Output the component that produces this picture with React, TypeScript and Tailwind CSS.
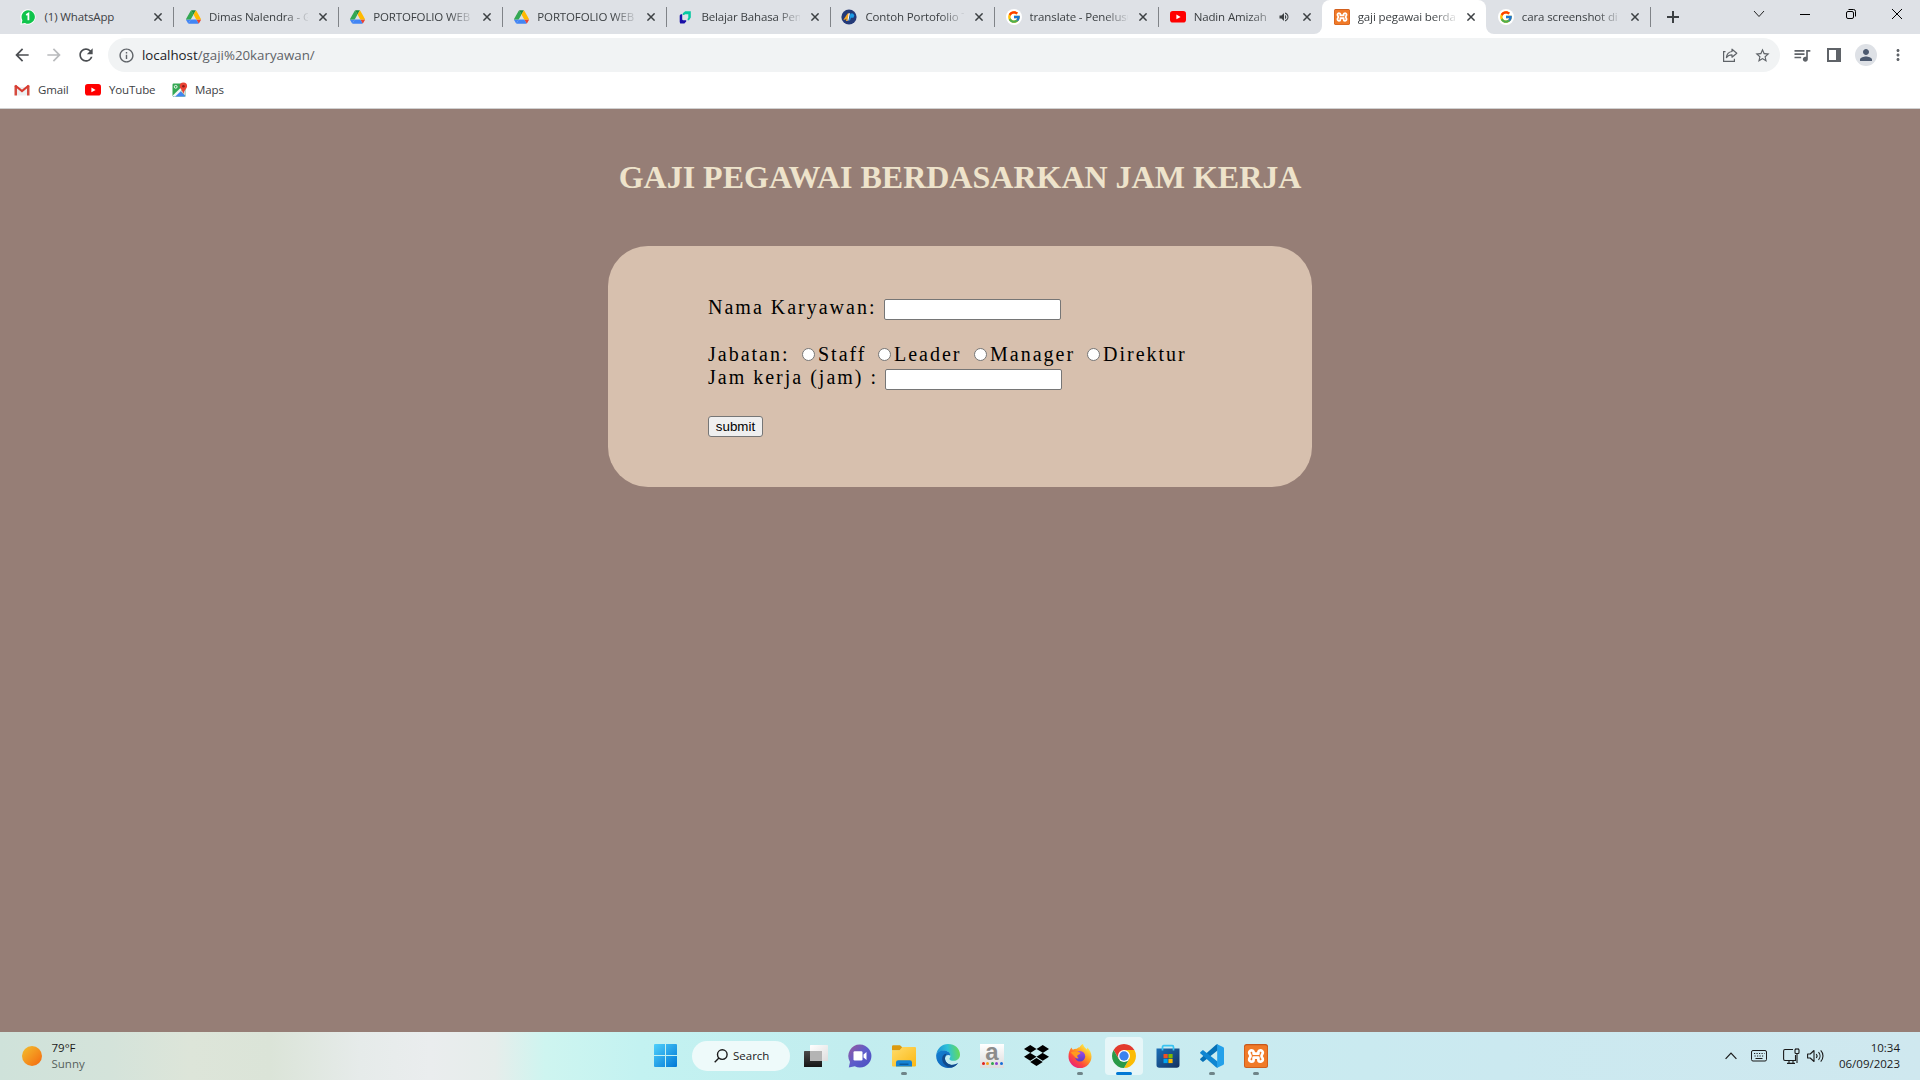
import React from "react";
import { FcGoogle } from "react-icons/fc";
import { FaDropbox } from "react-icons/fa";
import {
  MdArrowBack,
  MdArrowForward,
  MdRefresh,
  MdInfoOutline,
  MdStarBorder,
  MdQueueMusic,
  MdPerson,
  MdMoreVert,
  MdVolumeUp,
} from "react-icons/md";

function DriveIcon() {
  return (
    <svg viewBox="0 0 87.3 78" className="w-[15px] h-[14px]">
      <path d="m6.6 66.85 3.85 6.65c.8 1.4 1.95 2.5 3.3 3.3l13.75-23.8h-27.5c0 1.55.4 3.1 1.2 4.5z" fill="#4285f4" />
      <path d="m43.65 25-13.75-23.8c-1.35.8-2.5 1.900-3.300 3.300l-25.400 44a9.060 9.060 0 0 0 -1.200 4.500h27.500z" fill="#34a853" />
      <path d="m73.55 76.8c1.35-.8 2.5-1.9 3.3-3.3l1.6-2.75 7.65-13.25c.8-1.4 1.2-2.95 1.2-4.5h-27.5l5.85 11.5z" fill="#ea4335" />
      <path d="m43.65 25 13.75-23.8c-1.35-.8-2.9-1.2-4.5-1.2h-18.5c-1.6 0-3.15.45-4.5 1.2z" fill="#1f8f3e" />
      <path d="m59.8 53h-32.3l-13.75 23.8c1.35.8 2.9 1.2 4.5 1.2h50.8c1.6 0 3.15-.45 4.5-1.2z" fill="#4285f4" />
      <path d="m73.4 26.5-12.7-22c-.8-1.4-1.95-2.5-3.3-3.3l-13.75 23.8 16.15 28h27.45c0-1.55-.4-3.1-1.2-4.5z" fill="#ffba00" />
    </svg>
  );
}

function WhatsAppIcon() {
  return (
    <svg viewBox="0 0 16 16" className="w-4 h-4">
      <path d="M8 .2a7.7 7.7 0 1 1-3.300 14.700L.4 15.800l.9-4.200A7.700 7.700 0 0 1 8 .2z" fill="#fff" />
      <path d="M8 1.300a6.700 6.700 0 1 1-3 12.600L1.700 14.500l.7-3.200A6.700 6.700 0 0 1 8 1.300z" fill="#10c44c" />
      <path d="M6.200 6 8.400 4.600V11.200" fill="none" stroke="#fff" strokeWidth="1.800" />
    </svg>
  );
}

function YouTubeIcon() {
  return (
    <svg viewBox="0 0 16 12" className="w-4 h-3">
      <rect width="16" height="11.6" rx="2.8" fill="#f00" />
      <path d="M6.400 3.500v4.800l4.200-2.400z" fill="#fff" />
    </svg>
  );
}

function DicodingIcon() {
  return (
    <svg viewBox="0 0 16 16" className="w-4 h-4">
      <path d="M8.200 2.200h5.600v6.300l-1.800 2.800h-1.400V9.800l.7-.8V5.200H8L7.200 6H5.800V4.200z" fill="#07c9a2" />
      <path d="M3.800 5.200h1.400v5.300l.8.7h3.200v1.300l-1.800 1.900H3.200L2.700 13V6.500z" fill="#1a10a8" />
    </svg>
  );
}

function PortfolioIcon() {
  return (
    <svg viewBox="0 0 16 16" className="w-4 h-4">
      <circle cx="8" cy="8" r="7.600" fill="#243a78" />
      <path d="M2.400 10.800 6.600 4.600h1.600L6.400 12H4.900l.6-2.600-1.500 1.400z" fill="#f6a623" />
      <path d="M7.600 4.300h1.300L7.400 11.800H6.500z" fill="#fff" />
      <path d="M9.400 4.500h2.600l1.400 2-1 2.300H9.900L9 11.600H8z" fill="#1c9be6" />
    </svg>
  );
}

function GoogleIcon() {
  return (
    <div className="w-4 h-4 rounded-full bg-white flex items-center justify-center shrink-0">
      <FcGoogle size={14} />
    </div>
  );
}

function XamppIcon({ className }: { className: string }) {
  return (
    <svg viewBox="0 0 24 24" className={className}>
      <rect width="24" height="24" rx="2.500" fill="#c9581a" />
      <rect x=".8" y="1.200" width="22.400" height="22" rx="2" fill="#f07a28" />
      <path
        d="M9.600 9.700V8.200A1.900 1.900 0 0 0 7.700 6.300 2.300 2.300 0 0 0 5.200 8.600c0 1.700 1.300 1.900 1.300 3.400S5.200 13.700 5.200 15.400a2.300 2.300 0 0 0 2.500 2.300 1.900 1.900 0 0 0 1.900-1.900V13.700h4.800v2.100a1.900 1.900 0 0 0 1.900 1.900 2.300 2.300 0 0 0 2.500-2.300c0-1.700-1.300-1.900-1.300-3.400s1.300-1.700 1.300-3.400a2.300 2.300 0 0 0-2.500-2.300 1.900 1.900 0 0 0-1.900 1.900V9.700z"
        fill="none"
        stroke="#fff"
        strokeWidth="2.700"
        strokeLinejoin="round"
      />
    </svg>
  );
}

function CloseX() {
  return (
    <svg viewBox="0 0 8 8" className="w-2 h-2">
      <path d="M.4.4l7.200 7.200M7.600.4.4 7.600" stroke="#3c4043" strokeWidth="1.500" />
    </svg>
  );
}

type Tab = { title: string; icon: React.ReactNode; active?: boolean; audio?: boolean; sep?: boolean };

const tabs: Tab[] = [
  { title: "(1) WhatsApp", icon: <WhatsAppIcon />, sep: true },
  { title: "Dimas Nalendra - G", icon: <DriveIcon />, sep: true },
  { title: "PORTOFOLIO WEB", icon: <DriveIcon />, sep: true },
  { title: "PORTOFOLIO WEB", icon: <DriveIcon />, sep: true },
  { title: "Belajar Bahasa Pem", icon: <DicodingIcon />, sep: true },
  { title: "Contoh Portofolio T", icon: <PortfolioIcon />, sep: true },
  { title: "translate - Penelusu", icon: <GoogleIcon />, sep: true },
  { title: "Nadin Amizah", icon: <YouTubeIcon />, audio: true },
  { title: "gaji pegawai berda", icon: <XamppIcon className="w-4 h-4" />, active: true },
  { title: "cara screenshot di p", icon: <GoogleIcon />, sep: true },
];

function TabItem({ tab, first }: { tab: Tab; first: boolean }) {
  return (
    <div
      className={
        tab.active
          ? "relative w-[164.100px] h-[34px] shrink-0 flex items-center bg-white rounded-t-lg pb-px"
          : "relative w-[164.100px] h-[34px] shrink-0 flex items-center pb-px"
      }
    >
      <div
        className={
          first
            ? "ml-[10px] mr-[9px] w-4 h-4 flex items-center justify-center shrink-0"
            : "ml-[11.500px] mr-2 w-4 h-4 flex items-center justify-center shrink-0"
        }
      >
        {tab.icon}
      </div>
      <div
        className={
          tab.audio
            ? "w-[78px] shrink-0 whitespace-nowrap [mask-image:linear-gradient(to_right,black_70%,rgba(0,0,0,.3))]"
            : first
              ? "w-[98px] shrink-0 whitespace-nowrap"
              : "w-[98.500px] shrink-0 whitespace-nowrap [mask-image:linear-gradient(to_right,black_76%,rgba(0,0,0,.1))]"
        }
      >
        {tab.title}
      </div>
      {tab.audio && (
        <div className="w-[25px] shrink-0 flex items-center justify-center text-[#3c4043]">
          <MdVolumeUp size={12} />
        </div>
      )}
      <div className={tab.audio ? "ml-[6.500px] shrink-0" : "ml-[11px] shrink-0"}>
        <CloseX />
      </div>
      {tab.sep && <div className={first ? "ml-auto w-px h-5 bg-[#808388]" : "ml-auto -mr-px w-px h-5 bg-[#808388]"} />}
      {tab.active && (
        <>
          <div className="absolute bottom-0 -left-2 w-2 h-2 bg-white">
            <div className="w-2 h-2 bg-[#dee1e6] rounded-br-lg" />
          </div>
          <div className="absolute bottom-0 -right-2 w-2 h-2 bg-white">
            <div className="w-2 h-2 bg-[#dee1e6] rounded-bl-lg" />
          </div>
        </>
      )}
    </div>
  );
}

function WindowControls() {
  return (
    <div className="ml-auto flex h-7 items-center">
      <div className="w-[46px] flex justify-center">
        <svg viewBox="0 0 12 8" className="w-3 h-2">
          <path d="M1 1l5 5.500L11 1" fill="none" stroke="#222" />
        </svg>
      </div>
      <div className="w-[46px] flex justify-center">
        <div className="w-[10px] h-px bg-black mt-px" />
      </div>
      <div className="w-[46px] flex justify-center">
        <svg viewBox="0 0 12 12" className="w-3 h-3">
          <rect x="1.500" y="3.500" width="7" height="7" rx="1.500" fill="none" stroke="#000" />
          <path d="M3.500 1.500H8.500a2 2 0 0 1 2 2V8.500" fill="none" stroke="#000" />
        </svg>
      </div>
      <div className="w-[46px] flex justify-center">
        <svg viewBox="0 0 12 12" className="w-3 h-3">
          <path d="M1 1l10 10M11 1 1 11" stroke="#000" />
        </svg>
      </div>
    </div>
  );
}

function TabStrip() {
  return (
    <div className="h-[34px] bg-[#dee1e6] flex pl-[9.500px] text-[11.500px] tracking-[-0.130px] leading-[16px] text-[#3c4043]">
      {tabs.map((t, i) => (
        <TabItem key={i} tab={t} first={i === 0} />
      ))}
      <div className="ml-[16.500px] h-[34px] flex items-center">
        <svg viewBox="0 0 12 12" className="w-3 h-3">
          <path d="M6 0v12M0 6h12" stroke="#3c4043" strokeWidth="2" />
        </svg>
      </div>
      <WindowControls />
    </div>
  );
}

function Toolbar() {
  return (
    <div className="h-[42px] bg-white flex items-center text-[#5f6368]">
      <div className="w-8 ml-[6px] flex justify-center text-[#4b4e52]">
        <MdArrowBack size={20} />
      </div>
      <div className="w-8 flex justify-center text-[#b9bbbd]">
        <MdArrowForward size={20} />
      </div>
      <div className="w-8 flex justify-center text-[#4b4e52]">
        <MdRefresh size={20} />
      </div>
      <div className="ml-[6px] w-[1672px] h-[34px] rounded-full bg-[#f1f3f4] flex items-center">
        <MdInfoOutline size={17} className="ml-[9.500px]" />
        <div className="ml-[7.500px] text-[13.300px] leading-[18px] pb-px">
          <span className="text-[#202124]">localhost</span>/gaji%20karyawan/
        </div>
        <div className="ml-auto w-8 flex justify-center">
          <svg viewBox="0 0 16 16" className="w-4 h-4" fill="none" stroke="#5f6368" strokeWidth="1.200">
            <path d="M3.500 4.600H1.600v9.800h10.800v-2.600" />
            <path d="M10 2.200l4.800 4-4.800 4V7.900c-2.600 0-4.300.8-5.600 2.700.3-3.200 2-5.700 5.600-6.100z" strokeLinejoin="round" />
          </svg>
        </div>
        <div className="w-8 flex justify-center mr-[2px]">
          <MdStarBorder size={17} />
        </div>
      </div>
      <div className="w-8 ml-[6px] flex justify-center">
        <MdQueueMusic size={20} />
      </div>
      <div className="w-8 flex justify-center">
        <div className="w-[14px] h-[14px] border-2 border-r-[5px] border-[#5f6368]" />
      </div>
      <div className="w-8 flex justify-center">
        <div className="w-[22px] h-[22px] rounded-full bg-[#dee1e6] flex items-center justify-center text-[#4d5a70]">
          <MdPerson size={18} />
        </div>
      </div>
      <div className="w-8 flex justify-center">
        <MdMoreVert size={18} />
      </div>
    </div>
  );
}

function Bookmarks() {
  return (
    <div className="h-[33px] bg-white border-b border-[#d0d0d0] flex items-center text-[11.500px] tracking-[-0.120px] leading-[16px] text-[#3c4043] pb-[4px]">
      <svg viewBox="0 0 16 12" className="ml-[14px] w-4 h-3">
        <path d="M.5 1.500h2.500V11.500H.5zM13 1.500h2.500V11.500H13z" fill="#d54b3f" />
        <path d="M3 3h10v8.500H3z" fill="#eceff1" />
        <path d="M1.200 1.500 8 7l6.800-5.500" fill="none" stroke="#d93a2f" strokeWidth="2.200" />
      </svg>
      <div className="ml-2 w-[39px]">Gmail</div>
      <div className="ml-2 flex">
        <YouTubeIcon />
      </div>
      <div className="ml-2 w-[55px]">YouTube</div>
      <svg viewBox="0 0 16 16" className="ml-2 w-4 h-4">
        <rect x=".5" y="1.500" width="13" height="13" rx="1.200" fill="#34a853" />
        <path d="M1 14.500 7.500 8l6.300 6.500z" fill="#4285f4" />
        <path d="M.5 13.800 9.500 5l1.800 1.800L3 14.800z" fill="#f5f5f5" />
        <path d="M8.500 9l5 5V8z" fill="#d7dadd" />
        <path d="M11.400.6a3.700 3.700 0 0 1 3.700 3.700c0 2.500-2.600 3.200-3.500 7.200h-.4c-.9-4-3.500-4.700-3.500-7.200A3.700 3.700 0 0 1 11.400.6z" fill="#ea4335" />
        <circle cx="11.400" cy="4.200" r="1.300" fill="#8c1d18" />
        <circle cx="3.700" cy="4.800" r="1.400" fill="none" stroke="#fff" strokeWidth=".9" />
      </svg>
      <div className="ml-[7px]">Maps</div>
    </div>
  );
}

function Radio({ label, width }: { label: string; width: string }) {
  return (
    <label className={"flex items-center " + width}>
      <span className="w-[13px] h-[13px] rounded-full border border-[#767676] bg-white shrink-0" />
      <span className="ml-[3px]">{label}</span>
    </label>
  );
}

function Page() {
  return (
    <main className="flex-1 bg-[#967E76] flex flex-col items-center font-['Liberation_Serif',serif]">
      <h1 className="mt-[50px] h-[37px] leading-[37px] text-[32px] font-bold text-[#EEE3CB] whitespace-nowrap">
        GAJI PEGAWAI BERDASARKAN JAM KERJA
      </h1>
      <form className="mt-[50px] w-[704px] h-[241px] rounded-[40px] bg-[#D7C0AE] px-[100px] pt-[50px] text-[20px] leading-[23px] tracking-[2px] text-black whitespace-nowrap">
        <div className="h-[47px] flex items-start">
          <span className="w-[176px]">Nama Karyawan:</span>
          <input className="mt-[3px] w-[177px] h-[21px] border border-[#767676] rounded-[2px] bg-white" />
        </div>
        <div className="h-[23px] flex items-center">
          <span className="w-[94px]">Jabatan:</span>
          <Radio label="Staff" width="w-[76px]" />
          <Radio label="Leader" width="w-[96px]" />
          <Radio label="Manager" width="w-[113px]" />
          <Radio label="Direktur" width="w-[100px]" />
        </div>
        <div className="h-[47px] flex items-start">
          <span className="w-[177px]">Jam kerja (jam) :</span>
          <input className="mt-[3px] w-[177px] h-[21px] border border-[#767676] rounded-[2px] bg-white" />
        </div>
        <button
          type="button"
          className="mt-[3px] w-[55px] h-[21px] flex items-center justify-center border border-[#767676] rounded-[3px] bg-[#efefef] font-['Liberation_Sans',sans-serif] text-[13.333px] leading-[15px] tracking-normal"
        >
          submit
        </button>
      </form>
    </main>
  );
}

function StartIcon() {
  return (
    <svg viewBox="0 0 23 23" className="w-[23px] h-[23px]">
      <defs>
        <linearGradient id="win" x1="0" y1="0" x2="1" y2="1" gradientUnits="objectBoundingBox">
          <stop offset="0" stopColor="#4fd0fb" />
          <stop offset="1" stopColor="#0078d6" />
        </linearGradient>
      </defs>
      <path d="M1 0h10v11H0V1a1 1 0 0 1 1-1zM12 0h10a1 1 0 0 1 1 1v10H12zM0 12h11v11H1a1 1 0 0 1-1-1zM12 12h11v10a1 1 0 0 1-1 1H12z" fill="url(#win)" />
    </svg>
  );
}

function TaskViewIcon() {
  return (
    <svg viewBox="0 0 24 24" className="w-6 h-6">
      <defs>
        <linearGradient id="tv1" x1="0" y1="0" x2="0" y2="1">
          <stop offset="0" stopColor="#4a4a4a" />
          <stop offset="1" stopColor="#151515" />
        </linearGradient>
        <linearGradient id="tv2" x1="0" y1="0" x2="1" y2="1">
          <stop offset="0" stopColor="#fff" />
          <stop offset="1" stopColor="#dedede" />
        </linearGradient>
      </defs>
      <rect x="6" y="1" width="18" height="16" rx=".6" fill="url(#tv2)" />
      <rect x="0" y="7" width="18" height="16" rx=".6" fill="url(#tv1)" />
      <rect x="6" y="7" width="12" height="10" fill="#b4b4b4" />
    </svg>
  );
}

function ChatIcon() {
  return (
    <svg viewBox="0 0 24 24" className="w-6 h-6">
      <defs>
        <linearGradient id="chat" x1="0" y1="0" x2="1" y2="1">
          <stop offset="0" stopColor="#9a5a9c" />
          <stop offset=".5" stopColor="#5d5ccb" />
          <stop offset="1" stopColor="#4a4fc0" />
        </linearGradient>
      </defs>
      <path d="M12 .5a11.500 11.500 0 1 1-5.200 21.800L.8 23.500l1.200-5.600A11.500 11.500 0 0 1 12 .5z" fill="url(#chat)" />
      <rect x="5.500" y="7.200" width="9" height="9.300" rx="1.200" fill="#fff" />
      <path d="M15.500 10.500 18.500 8v8l-3-2.500z" fill="#fff" />
    </svg>
  );
}

function ExplorerIcon() {
  return (
    <svg viewBox="0 0 24 24" className="w-6 h-6">
      <defs>
        <linearGradient id="fold" x1="0" y1="0" x2="1" y2="1">
          <stop offset="0" stopColor="#ffdc6c" />
          <stop offset="1" stopColor="#fbb813" />
        </linearGradient>
      </defs>
      <path d="M0 2.500A1.300 1.300 0 0 1 1.300 1.200H8l2.500 2.200v3H0z" fill="#dc9a10" />
      <path d="M0 6.200h7.500l2.800-3.200H23a1 1 0 0 1 1 1V21.500a1 1 0 0 1-1 1H1a1 1 0 0 1-1-1z" fill="url(#fold)" />
      <path d="M4 22.500v-4a2.200 2.200 0 0 1 2.200-2.200h11.600a2.200 2.200 0 0 1 2.200 2.200v4z" fill="#1583d4" />
      <path d="M7.500 19.500h9v1.500h-9z" fill="#0c5a9c" />
    </svg>
  );
}

function EdgeIcon() {
  return (
    <svg viewBox="0 0 24 24" className="w-6 h-6">
      <defs>
        <linearGradient id="edgeTop" x1="0" y1=".5" x2="1" y2=".4">
          <stop offset="0" stopColor="#1c8fd6" />
          <stop offset=".5" stopColor="#2fc1d8" />
          <stop offset="1" stopColor="#68dc52" />
        </linearGradient>
        <linearGradient id="edgeBot" x1="0" y1="0" x2="1" y2="1">
          <stop offset="0" stopColor="#1380d2" />
          <stop offset="1" stopColor="#0e5ab0" />
        </linearGradient>
      </defs>
      <path d="M.2 11C1 4.600 6 0 12 0c7 0 12 4.800 12 10.500 0 4-3 6.300-6.300 6.300-3 0-4.300-1.200-4.300-1.900s1-1.200 1-3.100c0-2.700-2.500-5-6-5-4.400 0-7.600 1.700-8.200 4.200z" fill="url(#edgeTop)" />
      <path d="M.2 11C.7 8.500 3.800 6.600 7.800 6.600c4 0 6.600 2.400 6.600 5.200-1.400-1.600-5.400-1.200-5.400 2.800 0 4 4 7 8.500 6.200 2-.4 3.500-1.200 4.600-1.900C20 22 16.300 24 12 24 5.400 24-.4 18.600.2 11z" fill="url(#edgeBot)" />
      <path d="M9 14.600c0 4 4 7 8.500 6.200 2-.4 3.500-1.200 4.600-1.900-1.400 2-3.700 3.800-6.100 4.500C10 23.500 5.600 19 6.200 14c.4-2.700 2.500-4.600 4.600-4.300C9.600 10.800 9 12.400 9 14.600z" fill="#114a8b" />
    </svg>
  );
}

function AmazonIcon() {
  return (
    <div className="w-6 h-6 bg-gradient-to-b from-white to-[#dcdcdc] flex flex-col items-center">
      <div className="h-[18px] text-[24px] leading-[16px] font-bold text-[#8c8c8c] font-['Liberation_Sans',sans-serif]">a</div>
      <div className="flex gap-[1.500px]">
        <span className="w-[3px] h-[3px] rounded-full bg-[#e0201b]" />
        <span className="w-[3px] h-[3px] rounded-full bg-[#f5a01a]" />
        <span className="w-[3px] h-[3px] rounded-full bg-[#2fa84f]" />
        <span className="w-[3px] h-[3px] rounded-full bg-[#8a3fd0]" />
        <span className="w-[3px] h-[3px] rounded-full bg-[#1670d8]" />
      </div>
    </div>
  );
}

function FirefoxIcon() {
  return (
    <svg viewBox="0 0 24 24" className="w-6 h-6">
      <defs>
        <linearGradient id="ff" x1=".85" y1=".1" x2=".2" y2=".95">
          <stop offset="0" stopColor="#fff04a" />
          <stop offset=".4" stopColor="#ff9a1f" />
          <stop offset=".7" stopColor="#ff4a3c" />
          <stop offset="1" stopColor="#e8207c" />
        </linearGradient>
        <linearGradient id="ffc" x1="0" y1="0" x2="0" y2="1">
          <stop offset="0" stopColor="#a04ae8" />
          <stop offset="1" stopColor="#5a3cc4" />
        </linearGradient>
      </defs>
      <path d="M3.500 3.600c.2 1 .7 1.700 1.400 2.200C6 5 7.300 4.700 8.800 4.800c.7-1 1.800-1.600 2.900-1.600.6-1.500 1.900-2.700 3.300-3.200.4 2.200 2 3.700 4 5.400.2-.6.200-1.300.1-2 2.700 2.200 4.400 5.600 4.400 9.100A11.500 11.500 0 0 1 12 24 11.500 11.500 0 0 1 .5 12.500C.5 9 1.700 5.800 3.500 3.600z" fill="url(#ff)" />
      <circle cx="12" cy="12.200" r="5.200" fill="url(#ffc)" />
      <path d="M2.600 8.500c2.400-1.400 5.200-1.200 6.800-.4 1.300.1 2.900.3 3.100.9-.3 1.200-1.900 1.500-3 2.200-.5 1.200-.2 2.300 1.300 2.900-1.800.8-3.800-.2-4.600-2.200z" fill="#ff9a1f" />
    </svg>
  );
}

function ChromeIcon() {
  return (
    <svg viewBox="0 0 24 24" className="w-6 h-6">
      <path d="M22.390 6A12 12 0 0 1 12 24l5.200-9L12 6z" fill="#fbbc05" />
      <path d="M1.610 6 6.800 15 12 6h10.390A12 12 0 0 0 1.610 6z" fill="#e33b2e" />
      <path d="M6.800 15 1.610 6A12 12 0 0 0 12 24l5.200-9z" fill="#2a9a48" />
      <circle cx="12" cy="12" r="6" fill="#fff" />
      <circle cx="12" cy="12" r="4.700" fill="#3b82ee" />
    </svg>
  );
}

function StoreIcon() {
  return (
    <svg viewBox="0 0 24 24" className="w-6 h-6">
      <defs>
        <linearGradient id="store" x1="0" y1="0" x2="1" y2="1">
          <stop offset="0" stopColor="#1a6fb8" />
          <stop offset="1" stopColor="#16305e" />
        </linearGradient>
      </defs>
      <path d="M.5 4.500h23V21a2.800 2.800 0 0 1-2.800 2.800H3.300A2.800 2.800 0 0 1 .5 21z" fill="url(#store)" />
      <path d="M6.500 6.500V3a1.300 1.300 0 0 1 1.300-1.300h8.400A1.300 1.300 0 0 1 17.500 3v3.500" fill="none" stroke="#38c3f2" strokeWidth="1.700" />
      <rect x="7.500" y="10" width="4.200" height="4.200" fill="#f25022" />
      <rect x="12.400" y="10" width="4.200" height="4.200" fill="#7fba00" />
      <rect x="7.500" y="14.900" width="4.200" height="4.200" fill="#00a4ef" />
      <rect x="12.400" y="14.900" width="4.200" height="4.200" fill="#ffb900" />
    </svg>
  );
}

function CodeIcon() {
  return (
    <svg viewBox="0 0 24 24" className="w-6 h-6">
      <path d="M17.800.2v6L3.600 17.600a1 1 0 0 1-1.300 0L.5 16a1 1 0 0 1 0-1.500L16.300.4z" fill="#0570b6" />
      <path d="M17.800 23.800v-6L3.600 6.400a1 1 0 0 0-1.300 0L.5 8a1 1 0 0 0 0 1.500l15.800 14.100z" fill="#0f86d2" />
      <path d="M17.200.2 23 3a1.500 1.500 0 0 1 1 1.400v15.200a1.500 1.500 0 0 1-1 1.400l-5.800 2.800z" fill="#24a1ea" />
    </svg>
  );
}

function TaskCell({ children, state }: { children: React.ReactNode; state?: "open" | "active" }) {
  return (
    <div className="w-11 h-12 flex items-center justify-center shrink-0">
      <div
        className={
          state === "active"
            ? "relative w-[38px] h-[38px] rounded-[4px] bg-white/55 flex items-center justify-center pb-px"
            : "relative w-[38px] h-[38px] flex items-center justify-center pb-px"
        }
      >
        {children}
        {state === "open" && <div className="absolute bottom-0 left-4 w-[6px] h-[3px] rounded-full bg-[#6f8488]" />}
        {state === "active" && <div className="absolute bottom-0 left-[11px] w-4 h-[3px] rounded-full bg-[#0078d4]" />}
      </div>
    </div>
  );
}

function Taskbar() {
  return (
    <footer className="h-12 shrink-0 flex items-center text-[#1b1b1b] text-[11.500px] leading-4 bg-[linear-gradient(to_right,#cfe2da_0px,#d4e3da_110px,#dde5d9_190px,#dbe4d8_270px,#e6ebea_360px,#eaedee_430px,#e6edeb_495px,#cef5f0_545px,#c3f2f1_640px,#c2edef_850px,#c8ecf0_1100px,#cbe9f0_1500px,#cfe8ef_1920px)]">
      <div className="w-[643.500px] flex items-center pb-px">
        <div className="ml-[22px] w-[20px] h-[20px] rounded-full bg-gradient-to-br from-[#f0bf2e] to-[#f3640d]" />
        <div className="ml-[9.500px]">
          <div>79°F</div>
          <div className="text-[#56615d]">Sunny</div>
        </div>
      </div>
      <div className="w-11 flex justify-center pb-px">
        <StartIcon />
      </div>
      <div className="ml-[4.500px] mr-[4px] w-[98px] h-[30px] rounded-full bg-[#eefafa] flex items-center">
        <svg viewBox="0 0 14 14" className="ml-[22px] w-[14px] h-[14px]" fill="none" stroke="#1b1b1b" strokeWidth="1.400">
          <circle cx="8.300" cy="5.600" r="4.800" />
          <path d="M4.900 9.100.7 13.300" />
        </svg>
        <span className="ml-[5px]">Search</span>
      </div>
      <TaskCell><TaskViewIcon /></TaskCell>
      <TaskCell><ChatIcon /></TaskCell>
      <TaskCell state="open"><ExplorerIcon /></TaskCell>
      <TaskCell><EdgeIcon /></TaskCell>
      <TaskCell><AmazonIcon /></TaskCell>
      <TaskCell><FaDropbox size={25} color="#000" /></TaskCell>
      <TaskCell state="open"><FirefoxIcon /></TaskCell>
      <TaskCell state="active"><ChromeIcon /></TaskCell>
      <TaskCell><StoreIcon /></TaskCell>
      <TaskCell state="open"><CodeIcon /></TaskCell>
      <TaskCell state="open"><XamppIcon className="w-6 h-6" /></TaskCell>
      <div className="ml-auto flex items-center pr-5 pb-px">
        <svg viewBox="0 0 12 8" className="w-3 h-2">
          <path d="M.6 6.800 6 1.200l5.400 5.600" fill="none" stroke="#1b1b1b" strokeWidth="1.200" />
        </svg>
        <svg viewBox="0 0 16 12" className="ml-[14px] w-4 h-3" fill="none" stroke="#1b1b1b">
          <rect x=".5" y=".5" width="15" height="10.500" rx="1.500" />
          <path d="M3 3.500h10.500M3.500 6h9.500" strokeDasharray="1.200 1.300" />
          <path d="M4.500 8.500h7" />
        </svg>
        <svg viewBox="0 0 17 16" className="ml-4 w-[17px] h-4" fill="none" stroke="#1b1b1b" strokeWidth="1.100">
          <path d="M10 1.500H2A1.500 1.500 0 0 0 .6 3v8A1.500 1.500 0 0 0 2 12.500h10.500V7M4 15.400h8M6 12.500v2.900M10 12.500v2.900" />
          <rect x="12" y="1" width="4" height="4.500" rx="1" />
          <path d="M14 5.500V15M12.800.5v1M15.200.5v1" />
        </svg>
        <svg viewBox="0 0 17 14" className="ml-[7px] w-[17px] h-[14px]" fill="none" stroke="#1b1b1b" strokeWidth="1.100">
          <path d="M.6 5v4h2.600L7 12.500v-11L3.200 5z" strokeLinejoin="round" />
          <path d="M9.200 5a3 3 0 0 1 0 4M11.500 3.200a5.600 5.600 0 0 1 0 7.600M13.700 1.400a8 8 0 0 1 0 11.200" />
        </svg>
        <div className="ml-[13px] text-right w-[63px] whitespace-nowrap">
          <div>10:34</div>
          <div>06/09/2023</div>
        </div>
      </div>
    </footer>
  );
}

export default function App() {
  return (
    <div className="w-[1920px] h-[1080px] flex flex-col overflow-hidden font-['Open_Sans','Noto_Sans',sans-serif]">
      <TabStrip />
      <Toolbar />
      <Bookmarks />
      <Page />
      <Taskbar />
    </div>
  );
}
